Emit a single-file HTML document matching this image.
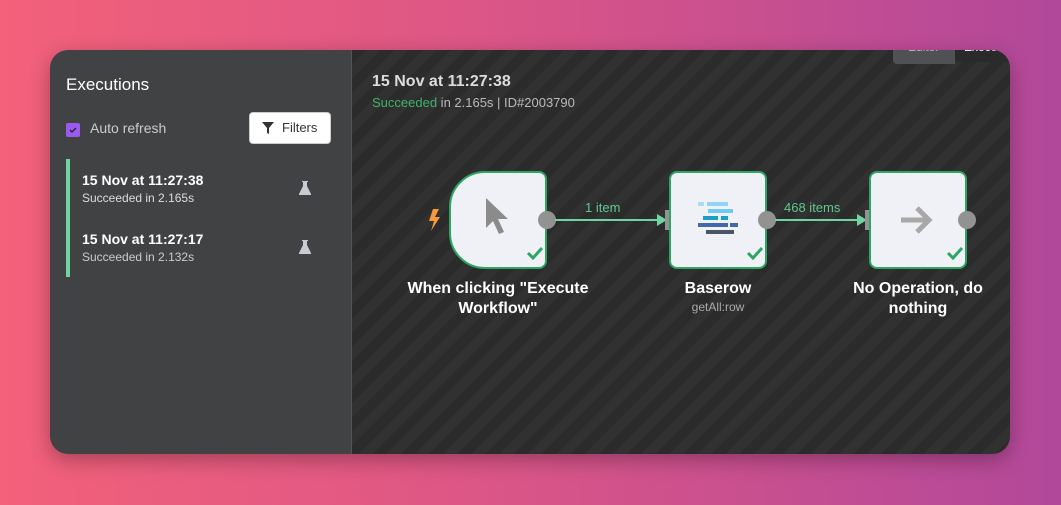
<!DOCTYPE html>
<html><head><style>
*{margin:0;padding:0;box-sizing:border-box}
body{width:1061px;height:505px;overflow:hidden;font-family:"Liberation Sans",sans-serif;background:linear-gradient(90deg,#f3617a 0%,#dc5686 45%,#b2489a 100%);position:relative}
.win{position:absolute;left:50px;top:50px;width:960px;height:404px;border-radius:18px;overflow:hidden;box-shadow:0 6px 20px rgba(0,0,0,.3)}
.side{position:absolute;left:0;top:0;width:302px;height:404px;background:#414244;border-right:1px solid #555}
.canvas{position:absolute;left:302px;top:0;width:658px;height:404px;background:#2b2b2b repeating-linear-gradient(135deg,#2b2b2b 0 10px,#313131 10px 20px)}
.t{position:absolute;white-space:nowrap}
.node{position:absolute;top:121px;width:98px;height:98px;background:#eff1f6;border:2px solid #2da664;border-radius:8px}
.out{position:absolute;width:18px;height:18px;border-radius:50%;background:#929292;top:161px}
.in{position:absolute;width:8px;height:20px;background:#929292;top:160px}
.line{position:absolute;height:2px;background:#6fd4a0;top:169px}
.arr{position:absolute;top:164px;width:0;height:0;border-left:10px solid #6fd4a0;border-top:6px solid transparent;border-bottom:6px solid transparent}
.lbl{position:absolute;color:#fff;font-size:16px;font-weight:bold;text-align:center;line-height:20px}
</style></head><body>
<div class="win">
<div class="side">
<div class="t" style="left:16px;top:25px;color:#fff;font-size:17px">Executions</div>
<div style="position:absolute;left:16px;top:73px;width:14px;height:14px;background:#9a5af0;border-radius:2px"></div>
<svg style="position:absolute;left:18px;top:75px" width="10" height="10"><path d="M2 5l2 2 4-4" stroke="#222" stroke-width="1.3" fill="none"/></svg>
<div class="t" style="left:40px;top:70px;color:#ccc;font-size:14px">Auto refresh</div>
<div style="position:absolute;left:199px;top:62px;width:82px;height:32px;background:#fff;border-radius:4px;border:1px solid #ccc"></div>
<svg style="position:absolute;left:211px;top:71px" width="14" height="14"><path d="M1 1h12l-5 6v6l-2-1V7z" fill="#333"/></svg>
<div class="t" style="left:232px;top:70px;color:#333;font-size:13px">Filters</div>
<div style="position:absolute;left:16px;top:109px;width:4px;height:118px;background:#6fd4a0"></div>
<div class="t" style="left:32px;top:122px;color:#fff;font-size:14px;font-weight:bold">15 Nov at 11:27:38</div>
<div class="t" style="left:32px;top:141px;color:#ddd;font-size:12px">Succeeded in 2.165s</div>
<div class="t" style="left:32px;top:181px;color:#fff;font-size:14px;font-weight:bold">15 Nov at 11:27:17</div>
<div class="t" style="left:32px;top:200px;color:#ccc;font-size:12px">Succeeded in 2.132s</div>
<svg style="position:absolute;left:249px;top:131px" width="12" height="14"><path d="M3 0h6v1H8v4l4 8v1H0v-1l4-8V1H3z" fill="#c8cbd4"/></svg>
<svg style="position:absolute;left:249px;top:190px" width="12" height="14"><path d="M3 0h6v1H8v4l4 8v1H0v-1l4-8V1H3z" fill="#c8cbd4"/></svg>
</div>
<div class="canvas">
<div style="position:absolute;left:541px;top:-2px;width:62px;height:16px;background:#505154;border-radius:0 0 0 4px"></div>
<div class="t" style="left:556px;top:-10px;color:#bbb;font-size:12px">Editor</div>
<div style="position:absolute;left:603px;top:-2px;width:60px;height:14px;background:#2a2a2a;border-radius:0 0 0 4px"></div>
<div class="t" style="left:612px;top:-10px;color:#fff;font-size:12px">Exece</div>
<div class="t" style="left:20px;top:23px;color:#ddd;font-size:16px;font-weight:bold">15 Nov at 11:27:38</div>
<div class="t" style="left:20px;top:45px;color:#bbb;font-size:13px"><span style="color:#3fb36c">Succeeded</span> in 2.165s | ID#2003790</div>

<svg style="position:absolute;left:75px;top:159px" width="14" height="22"><path d="M6 0h6L8 8h5L4 22l3-10H2z" fill="#f59a3a"/></svg>
<div class="node" style="left:97px;border-radius:36px 8px 8px 36px"></div>
<svg style="position:absolute;left:131px;top:147px" width="30" height="44"><path d="M3 1v30l7-7 6 13 5-2-6-13h10z" fill="#8b8b8b"/></svg>
<div class="out" style="left:186px"></div>
<div class="line" style="left:203px;width:108px"></div><div class="arr" style="left:305px"></div>
<div class="t" style="left:233px;top:150px;color:#5ec98e;font-size:13px">1 item</div>
<svg style="position:absolute;left:174px;top:196px" width="18" height="14"><path d="M2 7l5 5 9-10" stroke="#2da664" stroke-width="3" fill="none"/></svg>
<div class="lbl" style="left:46px;top:229px;width:200px">When clicking "Execute<br>Workflow"</div>

<div class="in" style="left:313px"></div>
<div class="node" style="left:317px"></div>
<svg style="position:absolute;left:346px;top:152px" width="42" height="34">
<rect x="0" y="0" width="6" height="4" fill="#a8dcf6"/><rect x="9" y="0" width="21" height="4" fill="#8fd3f6"/>
<rect x="10" y="7" width="25" height="4" fill="#6ecaf6"/>
<rect x="5" y="14" width="15" height="4" fill="#17a0c8"/><rect x="23" y="14" width="7" height="4" fill="#17a0c8"/>
<rect x="0" y="21" width="30" height="4" fill="#4068aa"/><rect x="32" y="21" width="8" height="4" fill="#4068aa"/>
<rect x="8" y="28" width="28" height="4" fill="#4a5568"/></svg>
<div class="out" style="left:406px"></div>
<div class="line" style="left:423px;width:88px"></div><div class="arr" style="left:505px"></div>
<div class="t" style="left:432px;top:150px;color:#5ec98e;font-size:13px">468 items</div>
<svg style="position:absolute;left:394px;top:196px" width="18" height="14"><path d="M2 7l5 5 9-10" stroke="#2da664" stroke-width="3" fill="none"/></svg>
<div class="lbl" style="left:316px;top:229px;width:100px">Baserow</div>
<div class="t" style="left:316px;top:250px;width:100px;text-align:center;color:#aaa;font-size:12px">getAll:row</div>

<div class="in" style="left:513px"></div>
<div class="node" style="left:517px"></div>
<svg style="position:absolute;left:547px;top:154px" width="36" height="32"><path d="M2 16h28M18 4l12 12-12 12" stroke="#a8a8a8" stroke-width="5" fill="none"/></svg>
<div class="out" style="left:606px"></div>
<svg style="position:absolute;left:594px;top:196px" width="18" height="14"><path d="M2 7l5 5 9-10" stroke="#2da664" stroke-width="3" fill="none"/></svg>
<div class="lbl" style="left:476px;top:229px;width:180px">No Operation, do<br>nothing</div>
</div>
</div>
</body></html>
